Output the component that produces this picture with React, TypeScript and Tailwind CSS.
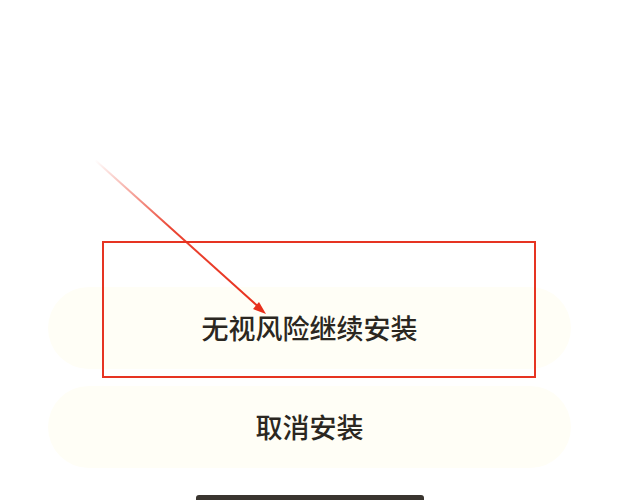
import React from "react";

export default function App() {
  return (
    <div
      className="relative w-[619px] h-[500px] overflow-hidden bg-white flex flex-col"
      style={{ fontFamily: '"Noto Sans CJK SC", "Noto Sans", sans-serif' }}
    >
      <div className="h-[287px] shrink-0" />
      <div className="flex flex-col gap-[17px] px-[48px]">
        <button className="h-[82px] w-full rounded-full bg-[#fffef6] text-[27px] font-medium text-[#2b2721] flex items-center justify-center">
          无视风险继续安装
        </button>
        <button className="h-[82px] w-full rounded-full bg-[#fffef6] text-[27px] font-medium text-[#2b2721] flex items-center justify-center">
          取消安装
        </button>
      </div>
      <div className="flex-1" />
      <div className="flex justify-center">
        <div className="w-[228px] h-[5px] rounded-t-[3px] bg-[#3a352f]" />
      </div>

      {/* annotation overlay */}
      <div className="absolute left-[102px] top-[241px] w-[434px] h-[137px] border-2 border-solid border-[#e63422]" />
      <svg className="absolute left-0 top-0" width="619" height="500" viewBox="0 0 619 500">
        <defs>
          <linearGradient id="g" x1="95" y1="160" x2="265" y2="313" gradientUnits="userSpaceOnUse">
            <stop offset="0" stopColor="#e8301c" stopOpacity="0" />
            <stop offset="0.45" stopColor="#e8301c" stopOpacity="0.9" />
            <stop offset="1" stopColor="#e8301c" />
          </linearGradient>
        </defs>
        <line x1="95" y1="160" x2="262" y2="310" stroke="url(#g)" strokeWidth="2" />
        <polygon points="266,314 253,309 259,302" fill="#e8301c" />
      </svg>
    </div>
  );
}
